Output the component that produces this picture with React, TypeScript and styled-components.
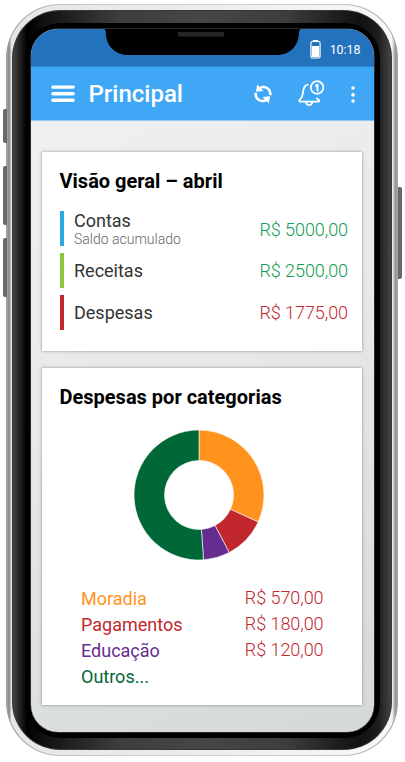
import React from "react";
import styled, { createGlobalStyle } from "styled-components";

const GlobalStyle = createGlobalStyle`
  * { box-sizing: border-box; }
  html, body { margin: 0; background: #fff; }
  body { font-family: Roboto, "Liberation Sans", sans-serif; overflow: hidden; }
`;

const Page = styled.main`
  width: 405px;
  height: 762px;
  padding: 4px 7px 5px 6px;
  background: #fff;
`;

const Phone = styled.div`
  position: relative;
  width: 392px;
  height: 752px;
  padding: 1px;
  border-radius: 54px;
  background: linear-gradient(90deg, #9b9b9b 0, #c4c4c4 14%, #d6d6d6 50%, #c4c4c4 86%, #a5a5a5 100%);
`;

const SideKey = styled.span<{ $side: "left" | "right"; $top: number; $height: number }>`
  position: absolute;
  top: ${(p) => p.$top}px;
  ${(p) => p.$side}: -3.5px;
  width: 4px;
  height: ${(p) => p.$height}px;
  background: #686868;
  border-radius: ${(p) => (p.$side === "left" ? "2px 0 0 2px" : "0 2px 2px 0")};
`;

const Metal = styled.div`
  height: 100%;
  padding: 5px;
  border-radius: 53px;
  background: linear-gradient(90deg, #a8a8a8 0, #858585 2px, #a9a9a9 3px, #e6e6e6 4.5px, #ececec 50%, #f8f8f8 calc(100% - 5px), #bdbdbd calc(100% - 3px), #858585 calc(100% - 1px), #bbb 100%);
`;

const Bezel = styled.div`
  height: 100%;
  padding: 1px;
  border-radius: 48px;
  background: #383838;
`;

const BezelFace = styled.div`
  height: 100%;
  padding: 11.5px;
  border-radius: 47px;
  background: linear-gradient(90deg, #444 0, #000 14px, #111 32px, #3d3d3d 105px, #464646 50%, #3d3d3d calc(100% - 105px), #111 calc(100% - 32px), #1c1c1c calc(100% - 13px), #444 100%);
`;

const Glass = styled.div`
  height: 100%;
  padding: 6px;
  border-radius: 35px;
  background: #000;
`;

const Screen = styled.div`
  position: relative;
  display: flex;
  flex-direction: column;
  height: 100%;
  border-radius: 27px;
  overflow: hidden;
  background: linear-gradient(155deg, #f1f2f4 0%, #e6e8e9 48%, #d5d8d8 100%);
  box-shadow: 0 0 0 0.5px #555;
`;

const StatusBar = styled.div`
  display: flex;
  flex: 0 0 38.5px;
  justify-content: flex-end;
  align-items: center;
  gap: 9px;
  padding: 5px 13px 0 0;
  background: #2372bd;
  border-bottom: 1px solid #2e83d0;
`;

const Notch = styled.svg`
  position: absolute;
  top: -0.5px;
  left: 70px;
`;

const Clock = styled.time`
  font-size: 12.4px;
  line-height: 14px;
  font-weight: 400;
  color: #fff;
`;

const AppBar = styled.header`
  display: flex;
  flex: 0 0 54px;
  align-items: center;
  padding: 0 18.5px 0 20px;
  background: #40a7f6;
  border-bottom: 1px solid #8ec8f5;
  color: #fff;
`;

const AppTitle = styled.h1`
  flex: 1;
  margin: 0 0 0 14px;
  font-size: 24px;
  line-height: 28px;
  font-weight: 500;
`;

const Actions = styled.div`
  display: flex;
  align-items: center;
  svg { display: block; }
`;

const Content = styled.div`
  display: flex;
  flex-direction: column;
  gap: 17px;
  padding: 31.4px 11.5px 0 11.5px;
`;

const Card = styled.section<{ $height: number }>`
  height: ${(p) => p.$height}px;
  padding: 17px 14px 0 18px;
  background: #fff;
  box-shadow: 0 0 3px rgba(0, 0, 0, 0.38);
`;

const CardTitle = styled.h2`
  margin: 0 0 0 -0.5px;
  font-size: 20px;
  line-height: 24px;
  font-weight: 700;
  color: #000;
`;

const Balances = styled.ul`
  display: flex;
  flex-direction: column;
  gap: 6.5px;
  margin: 17.5px 0 0;
  padding: 0;
  list-style: none;
`;

const BalanceRow = styled.li<{ $accent: string }>`
  display: flex;
  align-items: center;
  justify-content: space-between;
  height: 35.5px;
  padding-left: 10px;
  border-left: 4px solid ${(p) => p.$accent};
`;

const Label = styled.div`
  font-size: 18px;
  line-height: 21px;
  color: #333;
`;

const Caption = styled.div`
  margin-top: 1px;
  font-size: 14px;
  line-height: 15px;
  font-weight: 300;
  color: #666;
`;

const Amount = styled.span<{ $color: string; $drop?: number }>`
  font-size: 18px;
  line-height: 22px;
  font-weight: 300;
  letter-spacing: -0.06px;
  padding-top: ${(p) => (p.$drop ?? 0) * 2}px;
  color: ${(p) => p.$color};
`;

const Donut = styled.svg`
  display: block;
  margin: 20.6px 0 0 72.5px;
`;

const Legend = styled.ul`
  margin: 24px 24.5px 0 21px;
  padding: 0;
  list-style: none;
`;

const LegendRow = styled.li<{ $color: string }>`
  display: flex;
  justify-content: space-between;
  align-items: center;
  height: 26px;
  font-size: 18px;
  color: ${(p) => p.$color};
`;

const GREEN = "#0f9d50";
const RED = "#c1272d";

const balances = [
  { label: "Contas", caption: "Saldo acumulado", value: "R$ 5000,00", accent: "#29abe2", color: GREEN, drop: 1 },
  { label: "Receitas", value: "R$ 2500,00", accent: "#8cc63f", color: GREEN, drop: 0 },
  { label: "Despesas", value: "R$ 1775,00", accent: RED, color: RED, drop: 0 },
];

const categories = [
  { label: "Moradia", value: "R$ 570,00", color: "#ff931e", from: 0, to: 114.5 },
  { label: "Pagamentos", value: "R$ 180,00", color: RED, from: 114.5, to: 152.3 },
  { label: "Educação", value: "R$ 120,00", color: "#662d91", from: 152.3, to: 176 },
  { label: "Outros...", color: "#006837", from: 176, to: 360 },
];

const point = (angle: number, radius: number) => {
  const a = ((angle - 90) * Math.PI) / 180;
  return `${(65 + radius * Math.cos(a)).toFixed(3)} ${(65 + radius * Math.sin(a)).toFixed(3)}`;
};

const slice = (from: number, to: number) => {
  const large = to - from > 180 ? 1 : 0;
  return `M${point(from, 65)}A65 65 0 ${large} 1 ${point(to, 65)}L${point(to, 34.5)}A34.5 34.5 0 ${large} 0 ${point(from, 34.5)}Z`;
};

const MenuIcon = () => (
  <svg width="24" height="18" viewBox="0 0 24 18" stroke="#fff" strokeWidth="3.4" strokeLinecap="round">
    <path d="M1.9 2.1H22.1M1.9 8.8H22.1M1.9 15.3H22.1" />
  </svg>
);

const BatteryIcon = () => (
  <svg width="11" height="19" viewBox="0 0 11 19" fill="none">
    <path d="M3.5 1.5V.6H7.5V1.5" stroke="#fff" strokeWidth="1.2" />
    <rect x=".9" y="1.5" width="9.2" height="16.5" rx="1.5" stroke="#fff" strokeWidth="1.1" />
    <path d="M1.8 6H9.2V17H1.8Z" fill="#fff" />
  </svg>
);

const SyncIcon = () => (
  <svg width="18" height="20" viewBox="0 0 18 20" fill="none">
    <path d="M5.2 4.4C10.5 .8 17 4.6 16.3 11.2M12.8 15.6C7.5 19.2 1 15.4 1.7 8.8" stroke="#fff" strokeWidth="2.5" />
    <path d="M9.5 6.9L1.8 7.8L3.2 .6L5.8 3.2ZM8.5 13.1L16.2 12.2L14.8 19.4L12.2 16.8Z" fill="#fff" />
  </svg>
);

const BellIcon = () => (
  <svg width="27" height="27" viewBox="0 0 27 27" fill="none" stroke="#fff" strokeWidth="1.8" strokeLinecap="round" strokeLinejoin="round">
    <path d="M9.6 4.6C6.8 5.5 5.5 7.9 5.2 11.2C4.9 15.3 4.3 17.6 1.5 20.1Q.7 21.7 2.4 21.7H20.1Q22 21.7 21.1 20.3L18.8 18.4M8 22.4Q8.5 25.1 11.1 25.1T14.2 22.4" />
    <circle cx="19.1" cy="7.5" r="6.3" />
    <path d="M17.8 5.8L19.5 4.6V10.7" strokeWidth="1.9" />
  </svg>
);

const MoreIcon = () => (
  <svg width="4" height="19" viewBox="0 0 4 19" fill="#fff">
    <circle cx="2" cy="4" r="1.8" />
    <circle cx="2" cy="10.9" r="1.8" />
    <circle cx="2" cy="17.1" r="1.8" />
  </svg>
);

const Spacer = styled.span<{ $width: number }>`
  width: ${(p) => p.$width}px;
`;

export default function App() {
  return (
    <Page>
      <GlobalStyle />
      <Phone>
        <SideKey $side="left" $top={105} $height={34} />
        <SideKey $side="left" $top={162} $height={59} />
        <SideKey $side="left" $top={234} $height={59} />
        <SideKey $side="right" $top={183} $height={92} />
        <Metal>
          <Bezel>
            <BezelFace>
              <Glass>
                <Screen>
                  <StatusBar>
                    <BatteryIcon />
                    <Clock>10:18</Clock>
                  </StatusBar>
                  <Notch width="204" height="28" viewBox="0 0 204 28">
                    <path d="M0 0V.5H1Q4.8.5 4.8 4.5C4.8 18 14.5 27 27 27H176C188.500 27 198 18 198 4.500Q198.200.5 202 .5H204V0Z" fill="#000" />
                    <path d="M77 4H123V8.500H77Z" fill="#292526" />
                  </Notch>
                  <AppBar>
                    <MenuIcon />
                    <AppTitle>Principal</AppTitle>
                    <Actions>
                      <SyncIcon />
                      <Spacer $width={25.5} />
                      <BellIcon />
                      <Spacer $width={26.5} />
                      <MoreIcon />
                    </Actions>
                  </AppBar>
                  <Content>
                    <Card $height={198.5}>
                      <CardTitle>Visão geral – abril</CardTitle>
                      <Balances>
                        {balances.map((b) => (
                          <BalanceRow key={b.label} $accent={b.accent}>
                            <div>
                              <Label>{b.label}</Label>
                              {b.caption && <Caption>{b.caption}</Caption>}
                            </div>
                            <Amount $color={b.color} $drop={b.drop}>{b.value}</Amount>
                          </BalanceRow>
                        ))}
                      </Balances>
                    </Card>
                    <Card $height={337}>
                      <CardTitle>Despesas por categorias</CardTitle>
                      <Donut width="132" height="132" viewBox="-1 -1 132 132">
                        {categories.map((c) => (
                          <path key={c.label} d={slice(c.from, c.to)} fill={c.color} stroke="#fff" strokeWidth="0.6" />
                        ))}
                      </Donut>
                      <Legend>
                        {categories.map((c) => (
                          <LegendRow key={c.label} $color={c.color}>
                            <span>{c.label}</span>
                            {c.value && <Amount $color={RED}>{c.value}</Amount>}
                          </LegendRow>
                        ))}
                      </Legend>
                    </Card>
                  </Content>
                </Screen>
              </Glass>
            </BezelFace>
          </Bezel>
        </Metal>
      </Phone>
    </Page>
  );
}
